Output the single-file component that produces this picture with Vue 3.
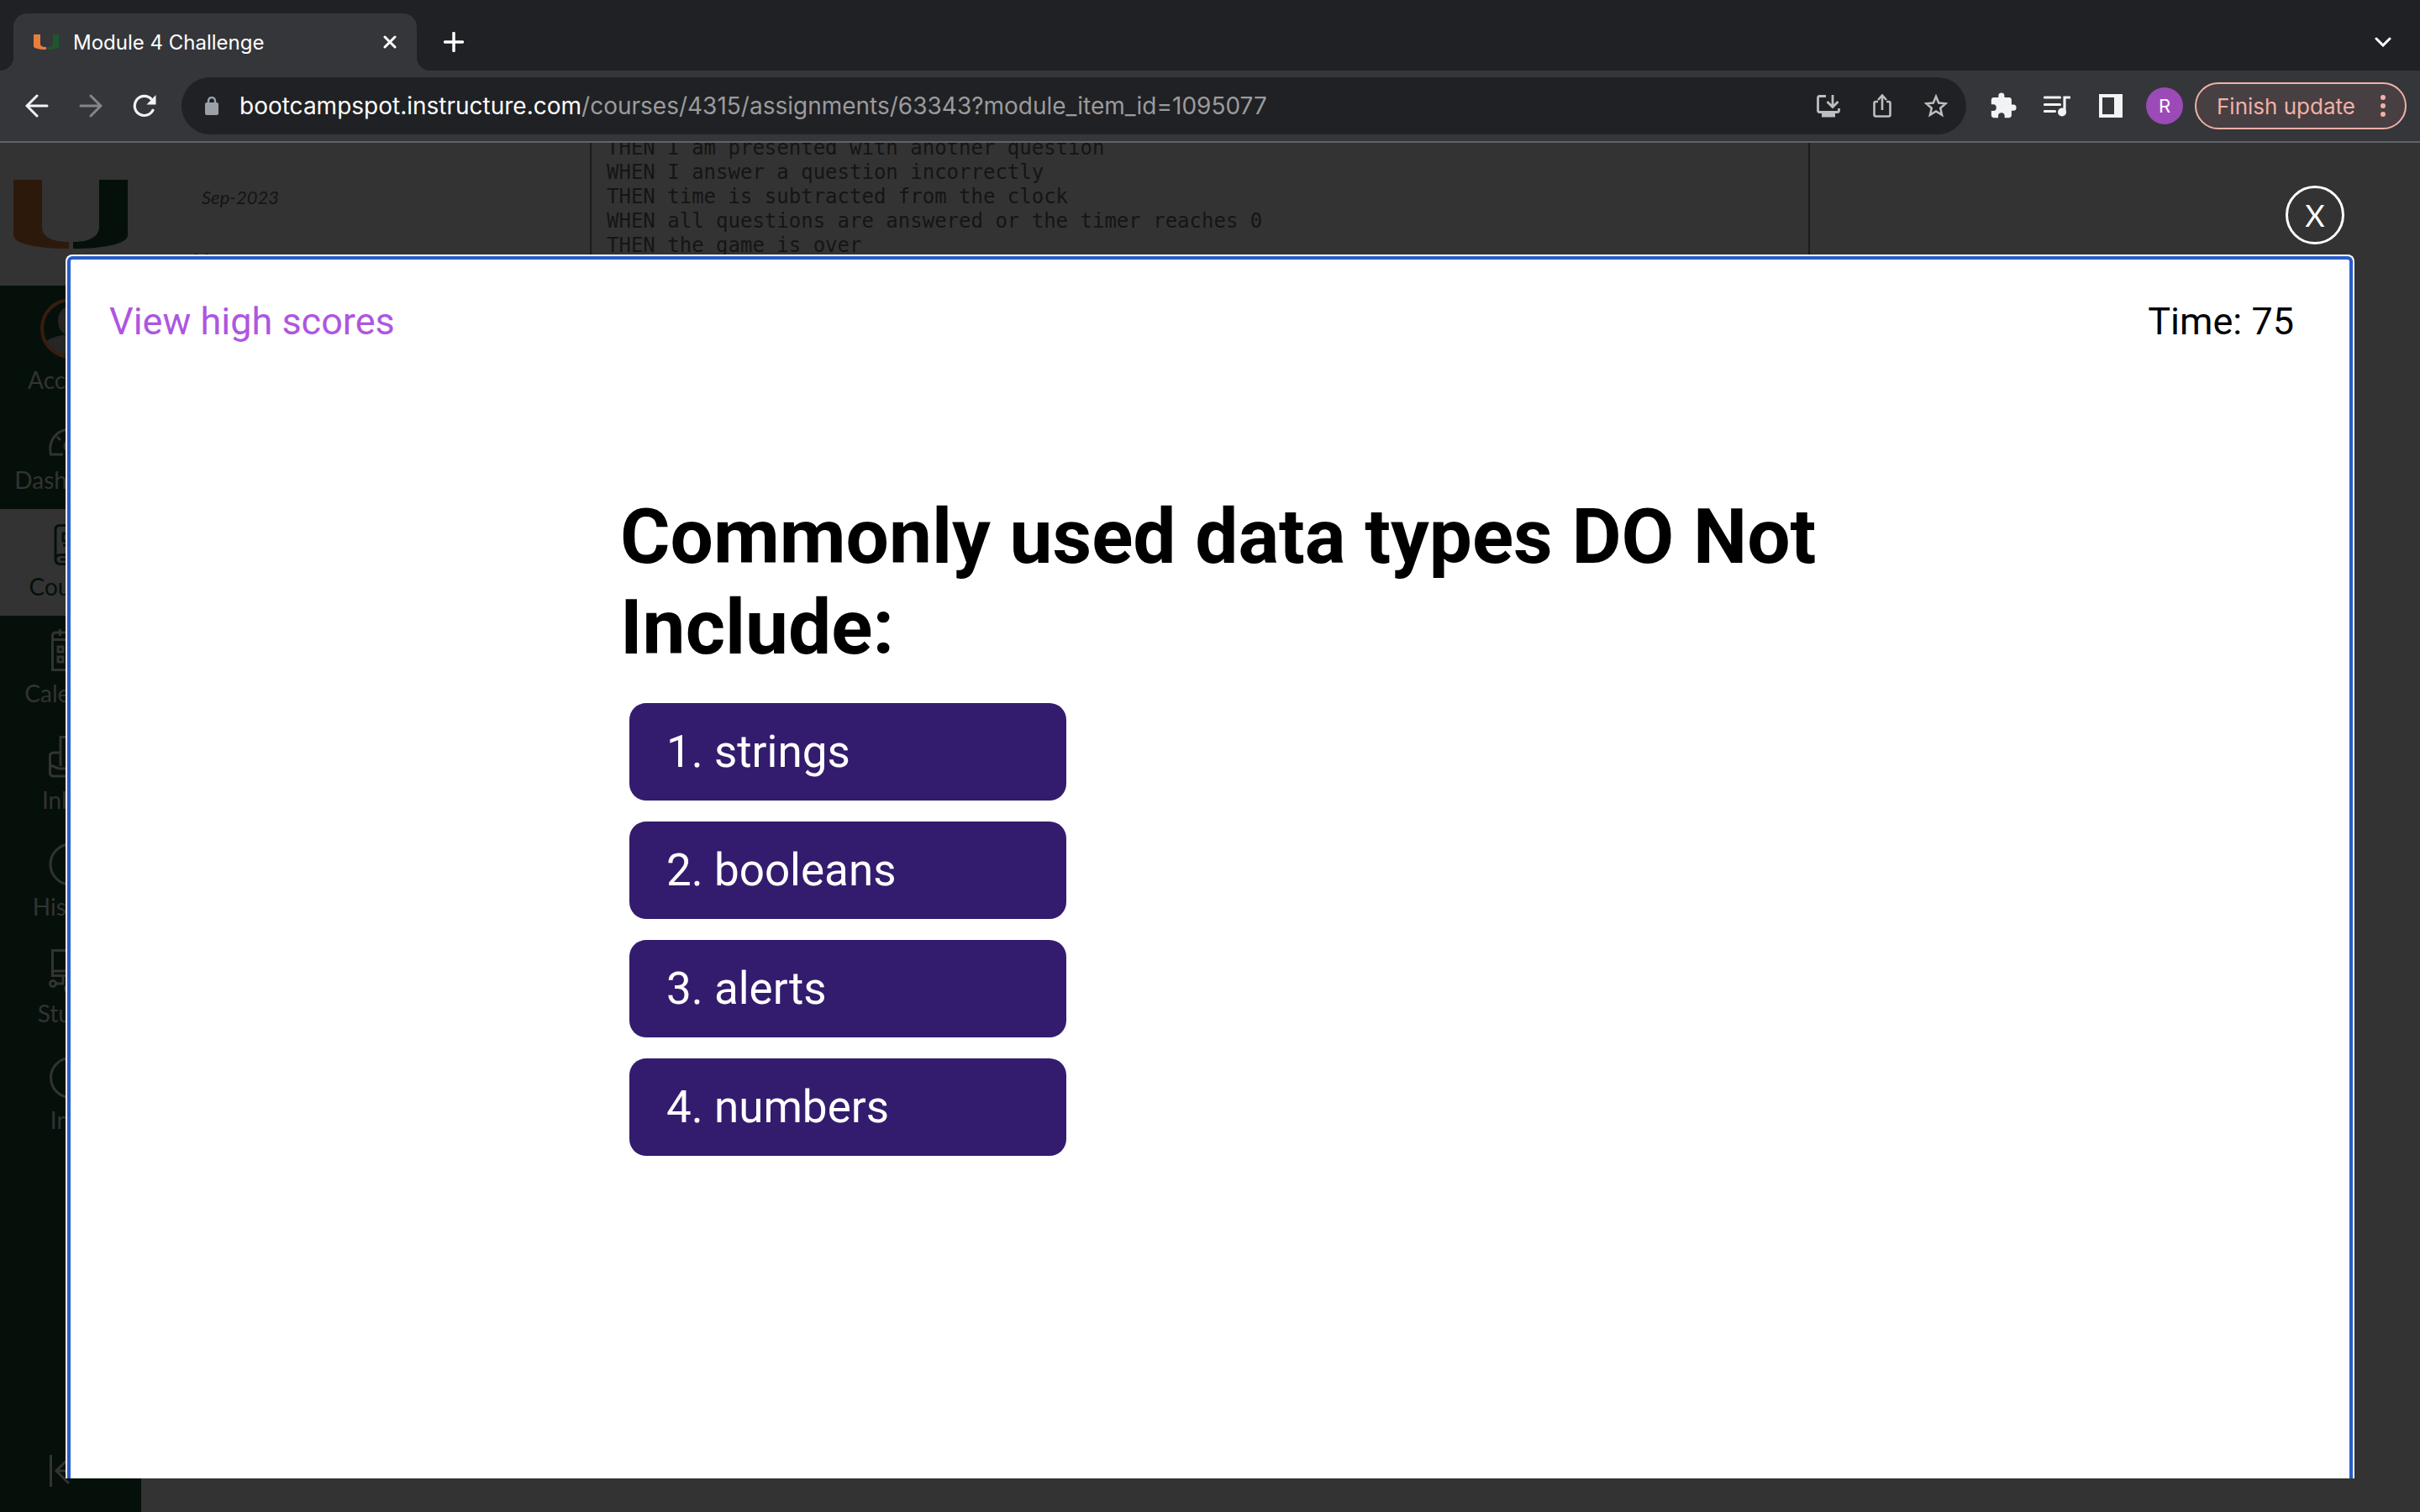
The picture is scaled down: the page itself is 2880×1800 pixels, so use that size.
<script setup>
import { ref } from 'vue'

const answers = ref(['strings', 'booleans', 'alerts', 'numbers'])
const timeLeft = ref(75)

const navItems = [
  { id: 'account', label: 'Account' },
  { id: 'dashboard', label: 'Dashboard' },
  { id: 'courses', label: 'Courses', active: true },
  { id: 'calendar', label: 'Calendar' },
  { id: 'inbox', label: 'Inbox' },
  { id: 'history', label: 'History' },
  { id: 'studio', label: 'Studio' },
  { id: 'info', label: 'Info' }
]

const criteria = [
  'THEN I am presented with another question',
  'WHEN I answer a question incorrectly',
  'THEN time is subtracted from the clock',
  'WHEN all questions are answered or the timer reaches 0',
  'THEN the game is over'
].join('\n')
</script>

<template>
  <div class="browser">
    <header class="chrome">
      <div class="tabstrip">
        <div class="tab">
          <svg class="favicon" viewBox="0 0 30 18" aria-hidden="true">
            <path fill="#e57f3c" d="M0 0h8v11c0 3 3 4 7 4v3C5 18 0 16 0 14z" />
            <path fill="#1d5730" d="M30 0h-7v11c0 3-3 4-7 4v3c10 0 14-2 14-4z" />
          </svg>
          <span class="tab-title">Module 4 Challenge</span>
          <button class="tab-close" aria-label="Close tab">
            <svg viewBox="0 0 16 16" width="16" height="16"><path d="M2 2l12 12M14 2L2 14" stroke="#fff" stroke-width="3" stroke-linecap="round" /></svg>
          </button>
        </div>
        <button class="strip-btn" aria-label="New tab">
          <svg viewBox="0 0 24 24" width="24" height="24"><path d="M12 1.500v21M1.500 12h21" stroke="#fff" stroke-width="3.500" stroke-linecap="round" /></svg>
        </button>
        <span class="spacer"></span>
        <button class="strip-btn" aria-label="Search tabs">
          <svg viewBox="0 0 20 12" width="20" height="12"><path d="M2 2l8 8 8-8" fill="none" stroke="#fff" stroke-width="3" stroke-linecap="round" /></svg>
        </button>
      </div>

      <div class="toolbar">
        <button class="icon-btn" aria-label="Back">
          <svg viewBox="0 0 28 28"><path d="M26 14H3M14 2L2 14l12 12" fill="none" stroke="#f1f3f4" stroke-width="3" stroke-linecap="round" /></svg>
        </button>
        <button class="icon-btn" aria-label="Forward">
          <svg viewBox="0 0 28 28"><path d="M2 14h23M14 2l12 12-12 12" fill="none" stroke="#85868a" stroke-width="3" stroke-linecap="round" /></svg>
        </button>
        <button class="icon-btn" aria-label="Reload">
          <svg viewBox="0 0 28 28">
            <path d="M24.500 18A11.500 11.500 0 1 1 22.500 6.500" fill="none" stroke="#f1f3f4" stroke-width="3.200" />
            <path d="M27.500 1v11.500H16.500z" fill="#f1f3f4" />
          </svg>
        </button>

        <div class="omnibox">
          <svg class="lock" viewBox="0 0 16 22" aria-hidden="true">
            <rect y="7" width="16" height="15" rx="2" fill="#9aa0a6" />
            <path d="M4 8V5a4 4 0 0 1 8 0v3" fill="none" stroke="#9aa0a6" stroke-width="2.400" />
          </svg>
          <span class="url"><span class="host">bootcampspot.instructure.com</span>/courses/4315/assignments/63343?module_item_id=1095077</span>
          <button class="icon-btn" aria-label="Install app">
            <svg viewBox="0 0 28 28" fill="none" stroke="#bdbebf" stroke-width="2.800">
              <path d="M11 2.500H3.500q-2 0-2 2v15q0 2 2 2h21q2 0 2-2V17" />
              <path d="M19 1v13M12.500 9l6.500 6.500L25.500 9" />
              <path d="M6 25h16" stroke-width="5" />
            </svg>
          </button>
          <button class="icon-btn" aria-label="Share">
            <svg viewBox="0 0 28 28" fill="none" stroke="#bdbebf" stroke-width="2.600">
              <path d="M9 9H6.500q-2 0-2 2v13.500q0 2 2 2h15q2 0 2-2V11q0-2-2-2H19" />
              <path d="M14 19V2M9 7l5-5.500L19 7" />
            </svg>
          </button>
          <button class="icon-btn" aria-label="Bookmark">
            <svg viewBox="0 0 28 28"><path d="M14 2.800l3.200 7.700 8.300.7-6.300 5.500 1.900 8.200-7.100-4.400-7.100 4.400 1.900-8.200-6.300-5.500 8.300-.7z" fill="none" stroke="#bdbebf" stroke-width="2.500" /></svg>
          </button>
        </div>

        <button class="icon-btn" aria-label="Extensions">
          <svg viewBox="0 0 24 24" class="puzzle"><path fill="#f1f3f4" d="M20.500 11H19V7c0-1.100-.9-2-2-2h-4V3.500a2.500 2.500 0 0 0-5 0V5H4c-1.100 0-2 .9-2 2v3.800h1.500a2.700 2.700 0 0 1 0 5.400H2V20c0 1.100.9 2 2 2h3.800v-1.500a2.700 2.700 0 0 1 5.400 0V22H17c1.100 0 2-.9 2-2v-4h1.500a2.500 2.500 0 0 0 0-5z" /></svg>
        </button>
        <button class="icon-btn" aria-label="Media control">
          <svg viewBox="0 0 32 28" class="media">
            <path d="M1.500 4h18M1.500 12.500h18M1.500 20.500h12M25 22V4h6" fill="none" stroke="#f1f3f4" stroke-width="3.200" stroke-linecap="round" />
            <circle cx="22" cy="21.500" r="5" fill="#f1f3f4" />
          </svg>
        </button>
        <button class="icon-btn" aria-label="Side panel">
          <svg viewBox="0 0 28 28"><path fill="#f1f3f4" fill-rule="evenodd" d="M0 0h28v28H0zM4 4v20h14V4z" /></svg>
        </button>
        <button class="icon-btn" aria-label="Profile"><span class="avatar">R</span></button>
        <button class="update">
          <span>Finish update</span>
          <svg viewBox="0 0 6 26" width="6" height="26" fill="#f1b0a8"><circle cx="3" cy="3" r="3" /><circle cx="3" cy="13" r="3" /><circle cx="3" cy="23" r="3" /></svg>
        </button>
      </div>
    </header>

    <main class="page">
      <nav class="sidebar" aria-label="Global navigation">
        <a class="school" href="#" aria-label="Home page">
          <svg viewBox="0 0 136 82" width="136" height="82">
            <path fill="#2d190c" d="M0 0h34v56c0 12 12 18 32 18v8C28 82 0 76 0 66z" />
            <path fill="#05100a" d="M136 0h-34v56c0 12-12 18-31 18v8c37 0 65-6 65-16z" />
          </svg>
        </a>
        <a v-for="item in navItems" :key="item.id" href="#" class="nav-item" :class="[item.id, { active: item.active }]">
          <svg v-if="item.id === 'account'" class="portrait" viewBox="0 0 72 72">
            <clipPath id="face"><circle cx="36" cy="36" r="33" /></clipPath>
            <g clip-path="url(#face)" fill="#262626"><ellipse cx="36" cy="27" rx="15" ry="18" /><path d="M4 54q8-8 22-10h20q14 2 22 10v20H4z" /></g>
            <circle cx="36" cy="36" r="34" fill="none" stroke="#3a1d0e" stroke-width="4" />
          </svg>
          <svg v-else viewBox="0 0 52 52" class="glyph">
            <g v-if="item.id === 'dashboard'"><path d="M17 47H2.500C-1 31 9 17 26 17s27 14 23.500 30H35" /><path d="M10 26l4 4M26 18v5M42 26l-4 4" /><circle cx="26" cy="37" r="7" /></g>
            <g v-else-if="item.id === 'courses'"><path d="M45 42.500V4.500H13q-5 0-5 5V46M45 39.500H14q-6 0-6 5.500t6 5.500h31M14 45h28" /><path d="M17 14h20v9H17zM17 28h20" /></g>
            <g v-else-if="item.id === 'calendar'"><path d="M4.500 49.500V9q0-4 4-4h35q4 0 4 4v40.500zM4.500 13.500h43M13.500 1v8M38.500 1v8" /><path d="M11 22h6v6h-6zM23 22h6v6h-6zM35 22h6v6h-6zM11 34h6v6h-6zM23 34h6v6h-6zM35 34h6v6h-6z" /></g>
            <g v-else-if="item.id === 'inbox'"><path d="M14 37V2.500h24V37M14 21H6q-4.500 0-4.500 4v20q0 4 4.500 4h40q4.500 0 4.500-4V25q0-4-4.500-4h-8M2 36l10 4h28l10-4M22 11h8M22 20h8M22 29h8" /></g>
            <g v-else-if="item.id === 'history'"><circle cx="26" cy="27" r="24" /><path d="M26 12v16l10 6" /></g>
            <g v-else-if="item.id === 'studio'"><path d="M4.500 2.500h43v30h-43zM4.500 27h43M17 33v9H9M26 33v12M38 33v9h6" /><circle cx="5" cy="42" r="3.500" /><circle cx="23" cy="48" r="3.500" /><circle cx="47" cy="42" r="3.500" /></g>
            <g v-else><circle cx="26" cy="27" r="23.500" /><path d="M26 24v15M26 15v4" /></g>
          </svg>
          <span>{{ item.label }}</span>
        </a>
        <button class="collapse" aria-label="Minimize navigation">
          <svg viewBox="0 0 52 38" width="52" height="38" fill="none" stroke="#333" stroke-width="3"><path d="M2.500 0v38M8 19h42M24 4L9 19l15 15" /></svg>
        </button>
      </nav>

      <aside class="course-nav">
        <em>Sep-2023</em>
        <a href="#">Home</a>
      </aside>

      <pre class="criteria">{{ criteria }}</pre>

      <button class="close" aria-label="Close preview">X</button>

      <section class="modal" role="dialog" aria-label="Quiz">
        <div class="quiz-bar">
          <a href="#">View high scores</a>
          <span>Time: {{ timeLeft }}</span>
        </div>
        <div class="quiz">
          <h1>Commonly used data types DO Not Include:</h1>
          <ol class="answers">
            <li v-for="(answer, i) in answers" :key="answer">
              <button class="answer">{{ i + 1 }}. {{ answer }}</button>
            </li>
          </ol>
        </div>
      </section>
    </main>
  </div>
</template>

<style>
body {
  background: #333;
}
</style>

<style scoped>
.browser {
  display: flex;
  flex-direction: column;
  height: 100vh;
  font-family: Inter, "Liberation Sans", sans-serif;
}
.browser * {
  box-sizing: border-box;
}
button {
  padding: 0;
  border: 0;
  background: none;
  font: inherit;
  color: inherit;
  cursor: pointer;
}
a {
  color: inherit;
  text-decoration: none;
}
svg {
  display: block;
  flex: none;
}
.spacer {
  flex: 1;
}

/* Browser chrome */
.chrome {
  background: #35363a;
  border-bottom: 2px solid #5f6368;
  flex: none;
}
.tabstrip {
  display: flex;
  align-items: center;
  height: 84px;
  padding: 0 16px;
  background: #202124;
}
.tab {
  position: relative;
  display: flex;
  align-items: center;
  align-self: flex-end;
  width: 480px;
  height: 68px;
  padding: 0 24px;
  border-radius: 16px 16px 0 0;
  background: #35363a;
}
.tab::before,
.tab::after {
  content: "";
  position: absolute;
  bottom: 0;
  width: 16px;
  height: 16px;
}
.tab::before {
  right: 100%;
  background: radial-gradient(circle at 0 0, #202124 16px, #35363a 16px);
}
.tab::after {
  left: 100%;
  background: radial-gradient(circle at 100% 0, #202124 16px, #35363a 16px);
}
.favicon {
  width: 30px;
  height: 18px;
}
.tab-title {
  flex: 1;
  margin-left: 17px;
  font-size: 24px;
  color: #fff;
}
.strip-btn {
  display: grid;
  place-items: center;
  width: 56px;
  height: 56px;
  margin-left: 16px;
  margin-top: 16px;
}
.toolbar {
  display: flex;
  align-items: center;
  height: 84px;
  padding: 0 16px 0 12px;
}
.icon-btn {
  display: grid;
  place-items: center;
  flex: none;
  width: 64px;
  height: 64px;
}
.icon-btn svg {
  width: 28px;
  height: 28px;
}
.icon-btn .puzzle {
  width: 34px;
  height: 34px;
}
.icon-btn .media {
  width: 32px;
}
.omnibox {
  display: flex;
  align-items: center;
  flex: 1;
  min-width: 0;
  height: 68px;
  margin: 0 12px;
  padding: 0 4px 0 28px;
  border-radius: 34px;
  background: #202124;
}
.lock {
  width: 16px;
  height: 22px;
}
.url {
  flex: 1;
  min-width: 0;
  overflow: hidden;
  margin-left: 25px;
  font-size: 28px;
  white-space: nowrap;
  color: #9a9b9d;
}
.host {
  color: #fff;
}
.avatar {
  display: grid;
  place-items: center;
  width: 44px;
  height: 44px;
  border-radius: 50%;
  background: #9c4ab8;
  color: #fff;
  font-size: 22px;
}
.update {
  display: flex;
  align-items: center;
  justify-content: space-between;
  flex: none;
  width: 252px;
  height: 56px;
  margin-left: 4px;
  padding: 0 23px 0 24px;
  border: 2px solid #f1b0a8;
  border-radius: 28px;
  background: #473f42;
  color: #f1b0a8;
  font-size: 26px;
}

/* Dimmed course page */
.page {
  position: relative;
  display: flex;
  flex: 1;
  min-height: 0;
  overflow: hidden;
  background: #333;
  font-family: Lato, "Liberation Sans", sans-serif;
}
.sidebar {
  display: flex;
  flex-direction: column;
  flex: none;
  width: 168px;
  background: #05100a;
  color: #333;
}
.school {
  height: 170px;
  padding: 44px 16px 0;
  background: #333;
}
.nav-item {
  display: flex;
  flex-direction: column;
  align-items: center;
  gap: 8px;
  height: 127px;
  padding-top: 15px;
  font-size: 28px;
  line-height: 34px;
}
.nav-item.account {
  height: 139px;
}
.nav-item.active {
  background: #333;
  color: #05100a;
}
.portrait {
  width: 72px;
  height: 72px;
}
.glyph {
  width: 52px;
  height: 52px;
  fill: none;
  stroke: currentColor;
  stroke-width: 3;
}
.collapse {
  margin: auto 58px 30px;
}
.course-nav {
  display: flex;
  flex-direction: column;
  gap: 43px;
  flex: none;
  width: 534px;
  padding: 48px 0 0 72px;
  color: #151515;
}
.course-nav em {
  font-size: 22px;
  line-height: 34px;
}
.course-nav a {
  margin-left: -11px;
  font-size: 28px;
  line-height: 34px;
  color: #05100a;
}
.course-nav em,
.course-nav a {
  width: max-content;
}
.criteria {
  flex: 1;
  margin: -8px 726px 40px 0;
  padding-left: 18px;
  border: solid #1b1b1b;
  border-width: 0 2px;
  font: 24px/29px "DejaVu Sans Mono", monospace;
  color: #151515;
}

/* Quiz preview laid over the page */
.close {
  position: absolute;
  top: 51px;
  right: 90px;
  width: 70px;
  height: 70px;
  border: 3px solid #fff;
  border-radius: 50%;
  color: #fff;
  font-size: 36px;
}
.modal {
  position: absolute;
  inset: 133px 78px 40px;
  border: 2px solid #fff;
  border-bottom: 0;
  border-radius: 8px 8px 0 0;
  background: #fff;
  font-family: Roboto, "Liberation Sans", sans-serif;
}
.modal::before {
  content: "";
  position: absolute;
  inset: 0;
  border: 4px solid #285dc7;
  border-bottom: 0;
  border-radius: 6px 6px 0 0;
  pointer-events: none;
}
.quiz-bar {
  display: flex;
  justify-content: space-between;
  padding: 51px 70px 0 50px;
  font-size: 45px;
  line-height: 54px;
  color: #000;
}
.quiz-bar a {
  color: #ae56e0;
}
.quiz {
  max-width: 1480px;
  margin: 175px auto 0;
  padding-left: 38px;
}
h1 {
  margin: 0;
  font-size: 91px;
  line-height: 108px;
  color: #000;
}
.answers {
  display: flex;
  flex-direction: column;
  gap: 25px;
  margin: 36px 0 0 11px;
  padding: 0;
  list-style: none;
}
.answers li {
  display: flex;
}
.answer {
  width: 520px;
  height: 116px;
  padding: 0 44px;
  border-radius: 20px;
  background: #331c6e;
  color: #fff;
  font-size: 53px;
  text-align: left;
}
</style>
